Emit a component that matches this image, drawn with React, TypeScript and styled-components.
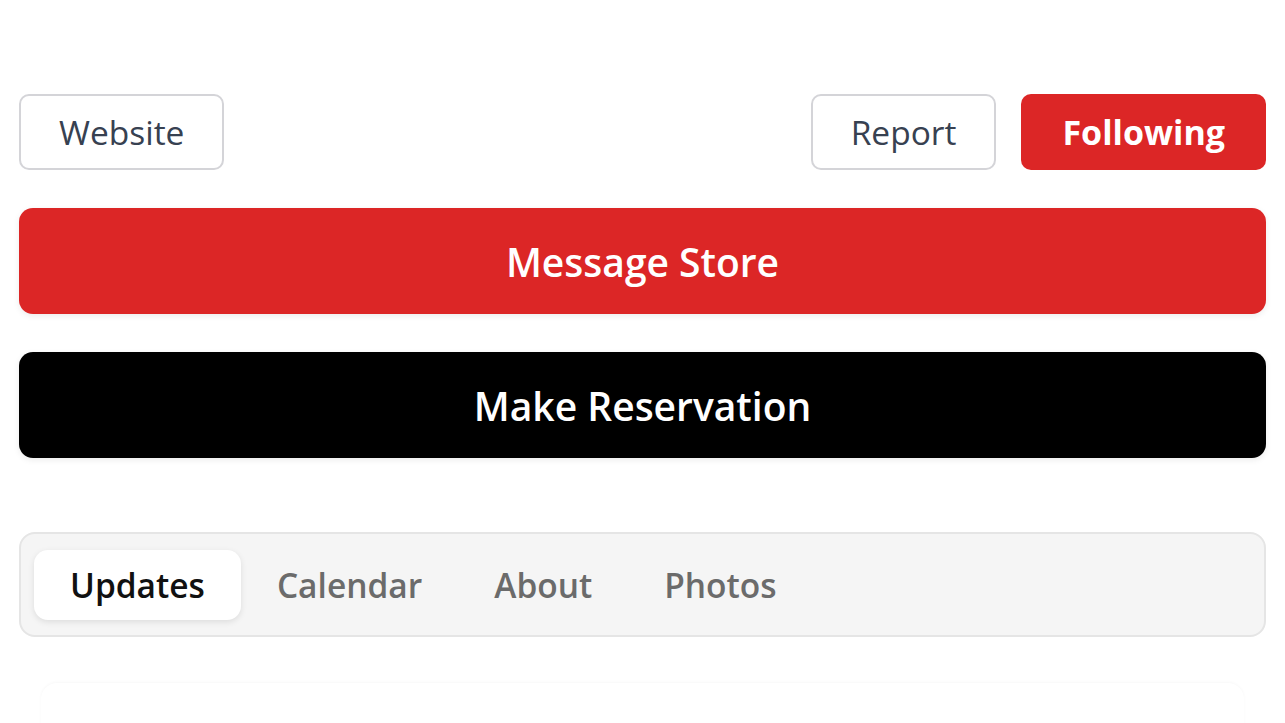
import React, { useState } from 'react';
import styled, { createGlobalStyle } from 'styled-components';

const GlobalStyle = createGlobalStyle`
  html, body {
    margin: 0;
    padding: 0;
    background: #ffffff;
  }
  body {
    font-family: 'Open Sans', 'Noto Sans', 'Liberation Sans', sans-serif;
  }
`;

const tabs = ['Updates', 'Calendar', 'About', 'Photos'];

export default function App() {
  const [active, setActive] = useState('Updates');

  return (
    <>
      <GlobalStyle />
      <Page>
        <TopRow>
          <OutlineButton>Website</OutlineButton>
          <RightGroup>
            <OutlineButton>Report</OutlineButton>
            <FollowButton>Following</FollowButton>
          </RightGroup>
        </TopRow>
        <WideButton tone="red" gapAfter={38}>Message Store</WideButton>
        <WideButton tone="black" gapAfter={74}>Make Reservation</WideButton>
        <TabBar>
          {tabs.map((t) => (
            <Tab key={t} active={t === active} onClick={() => setActive(t)}>
              {t}
            </Tab>
          ))}
        </TabBar>
        <FeedCard />
      </Page>
    </>
  );
}

const Page = styled.div`
  display: flex;
  flex-direction: column;
  padding: 94px 19px 0;
  height: 723px;
  box-sizing: border-box;
  overflow: hidden;

  & > * {
    flex-shrink: 0;
  }
`;

const TopRow = styled.div`
  display: flex;
  justify-content: space-between;
  align-items: center;
  margin-bottom: 38px;
`;

const RightGroup = styled.div`
  display: flex;
  gap: 25px;
`;

const OutlineButton = styled.button`
  height: 76px;
  padding: 0 38px;
  box-sizing: border-box;
  border: 2px solid #d4d4d8;
  border-radius: 10px;
  background: #ffffff;
  color: #374151;
  font-family: inherit;
  font-size: 33.5px;
  font-weight: 400;
  cursor: pointer;
`;

const FollowButton = styled.button`
  height: 76px;
  padding: 0 41px;
  box-sizing: border-box;
  border: none;
  border-radius: 10px;
  background: #dc2626;
  color: #ffffff;
  font-family: inherit;
  font-size: 34px;
  font-weight: 700;
  cursor: pointer;
`;

const WideButton = styled.button<{ tone: 'red' | 'black'; gapAfter: number }>`
  height: 106px;
  width: 100%;
  border: none;
  border-radius: 14px;
  background: ${(p) => (p.tone === 'red' ? '#dc2626' : '#000000')};
  color: #ffffff;
  font-family: inherit;
  font-size: 39px;
  font-weight: 600;
  box-shadow: 0 2px 6px rgba(0, 0, 0, 0.08);
  margin-bottom: ${(p) => p.gapAfter}px;
  cursor: pointer;
`;

const TabBar = styled.div`
  display: flex;
  align-items: center;
  height: 105px;
  box-sizing: border-box;
  padding: 0 13px;
  background: #f5f5f5;
  border: 2px solid #e5e5e5;
  border-radius: 16px;
`;

const Tab = styled.button<{ active: boolean }>`
  height: 70px;
  padding: 0 36px;
  border: none;
  border-radius: 14px;
  background: ${(p) => (p.active ? '#ffffff' : 'transparent')};
  box-shadow: ${(p) => (p.active ? '0 2px 6px rgba(0, 0, 0, 0.1)' : 'none')};
  color: ${(p) => (p.active ? '#111111' : '#6b6b6b')};
  font-family: inherit;
  font-size: 33.5px;
  font-weight: 600;
  cursor: pointer;
`;

const FeedCard = styled.div`
  margin: 46px 22px 0;
  height: 60px;
  border-radius: 16px;
  background: #ffffff;
  box-shadow: 0 -1px 3px rgba(0, 0, 0, 0.03);
`;
